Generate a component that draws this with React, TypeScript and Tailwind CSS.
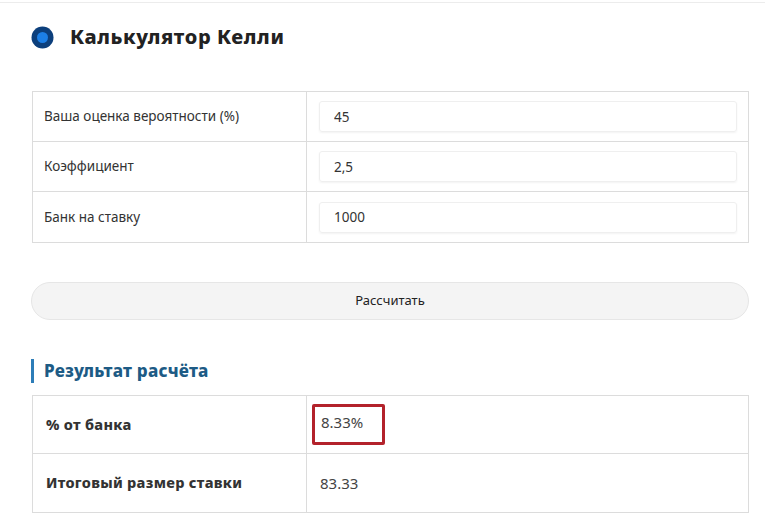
import { ReactNode } from "react";

const font = { fontFamily: '"Noto Sans", "Open Sans", sans-serif' };

function InputRow({ label, value, last }: { label: string; value: string; last?: boolean }) {
  return (
    <div className={`flex h-[50px] ${last ? "" : "border-b border-[#dcdcdc]"}`}>
      <div className="w-[274px] shrink-0 border-r border-[#dcdcdc] pl-[11px] flex items-center text-[13.5px] text-[#333]">
        {label}
      </div>
      <div className="flex-1 flex items-center pl-[12px] pr-[11px]">
        <input
          readOnly
          value={value}
          className="w-full h-[31px] rounded-[3px] border border-[#efefef] shadow-[0_1px_2px_rgba(0,0,0,0.05)] pl-[14px] text-[13.5px] text-[#333] outline-none"
        />
      </div>
    </div>
  );
}

function ResultRow({ label, children, last }: { label: string; children: ReactNode; last?: boolean }) {
  return (
    <div className={`flex h-[58px] ${last ? "" : "border-b border-[#dcdcdc]"}`}>
      <div className="w-[274px] shrink-0 border-r border-[#dcdcdc] pl-[13px] flex items-center text-[14.5px] font-extrabold tracking-[0.3px] text-[#333]">
        {label}
      </div>
      <div className="flex-1 flex items-center pl-[5px]">{children}</div>
    </div>
  );
}

export default function App() {
  return (
    <div className="w-[765px] h-[518px] bg-white overflow-hidden border-t border-[#ececec] mt-[2px]" style={font}>
      <div className="flex items-center gap-[16px] pl-[31px] pt-[4px] h-[64px]">
        <svg width="23" height="23" viewBox="0 0 23 23">
          <circle cx="11.5" cy="11.5" r="11" fill="#0c3f7c" />
          <circle cx="11.5" cy="11.5" r="5.5" fill="#1c7fe6" />
        </svg>
        <h1 className="text-[20px] font-extrabold text-[#222] tracking-[0.6px]">Калькулятор Келли</h1>
      </div>

      <div className="ml-[32px] mr-[16px] mt-[24px] border border-[#dcdcdc]">
        <InputRow label="Ваша оценка вероятности (%)" value="45" />
        <InputRow label="Коэффициент" value="2,5" />
        <InputRow label="Банк на ставку" value="1000" last />
      </div>

      <div className="ml-[31px] mr-[16px] mt-[39px]">
        <button className="w-full h-[38px] rounded-full bg-[#f4f4f4] border border-[#e6e6e6] text-[13px] text-[#222]">
          Рассчитать
        </button>
      </div>

      <div className="ml-[31px] mt-[39px] flex items-center h-[24px]">
        <div className="w-[3px] h-[24px] bg-[#2d7db8]" />
        <h2 className="ml-[10px] text-[17px] font-extrabold tracking-[0.2px] text-[#1d5b85]">Результат расчёта</h2>
      </div>

      <div className="ml-[32px] mr-[16px] mt-[12px] border border-[#dcdcdc]">
        <ResultRow label="% от банка">
          <div className="w-[73px] h-[41px] border-[3px] border-[#b3222b] rounded-[2px] flex items-start pt-[4px] pl-[6px] text-[15px] text-[#444]">
            8.33%
          </div>
        </ResultRow>
        <ResultRow label="Итоговый размер ставки" last>
          <span className="pl-[8px] text-[15px] text-[#444]">83.33</span>
        </ResultRow>
      </div>
    </div>
  );
}
